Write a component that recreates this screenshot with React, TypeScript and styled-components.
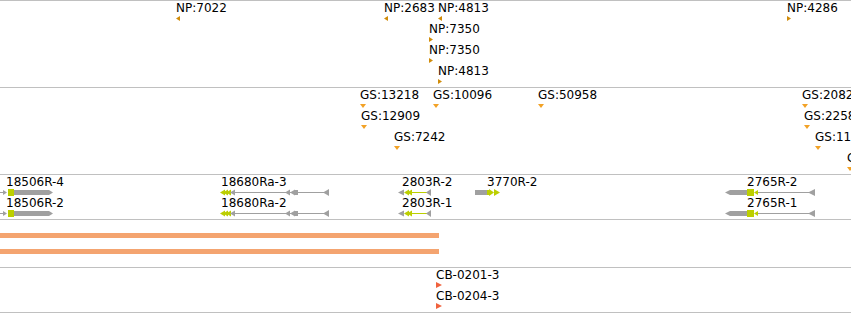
import styled, { createGlobalStyle } from "styled-components";

const GREY = "#a0a0a0";
const LIME = "#bccf00";

const Global = createGlobalStyle`
  html, body {
    margin: 0;
    padding: 0;
    background: #fff;
    overflow: hidden;
  }
  body {
    font-family: "DejaVu Sans", "Liberation Sans", sans-serif;
  }
`;

const Browser = styled.div`
  width: 851px;
  height: 313px;
  overflow: hidden;
  display: flex;
  flex-direction: column;
  background: #fff;
`;

const Track = styled.div<{ $h: number; $last?: boolean }>`
  height: ${(p) => p.$h}px;
  flex-shrink: 0;
  box-sizing: border-box;
  border-top: 1px solid #c0c0c0;
  border-bottom: ${(p) => (p.$last ? "1px solid #c0c0c0" : "none")};
  padding-top: 1px;
  display: flex;
  flex-direction: column;
  overflow: hidden;
`;

const Lane = styled.div`
  position: relative;
  height: 21px;
  flex-shrink: 0;
`;

const Label = styled.span`
  position: absolute;
  top: 0;
  font-size: 12px;
  line-height: 13px;
  color: #000;
  white-space: nowrap;
`;

const Glyph = styled.svg`
  position: absolute;
  top: 12px;
  display: block;
  overflow: visible;
`;

const BarTrack = styled(Track)`
  padding-top: 13px;
  gap: 11px;
`;

const Bar = styled.div<{ $w: number }>`
  width: ${(p) => p.$w}px;
  height: 5px;
  background: #f4a470;
  flex-shrink: 0;
`;

// arrowhead pointing left or right, centred on y = 4.5
const tri = (x: number, w: number, h: number, dir: "l" | "r") => {
  const t = 4.5 - h / 2;
  const b = 4.5 + h / 2;
  return dir === "l"
    ? `${x},4.5 ${x + w},${t} ${x + w},${b}`
    : `${x},${t} ${x + w},4.5 ${x},${b}`;
};

type Mark = { label: string; x: number; dir: "l" | "r" | "d" };

const markColors = { np: "#d08c0a", gs: "#f2a226", cb: "#f0623e" };

const Marker = ({ m, kind }: { m: Mark; kind: keyof typeof markColors }) => {
  const c = markColors[kind];
  let shape = "";
  if (m.dir === "d") shape = "0,3 6,3 3,7";
  else if (kind === "cb") shape = "0,1 6,4 0,7";
  else shape = m.dir === "l" ? "0,4.5 4,2 4,7" : "0,2 4,4.5 0,7";
  return (
    <>
      <Label style={{ left: m.x }}>{m.label}</Label>
      <Glyph width={7} height={9} style={{ left: m.x }}>
        <polygon points={shape} fill={c} />
      </Glyph>
    </>
  );
};

const npLanes: Mark[][] = [
  [
    { label: "NP:7022", x: 176, dir: "l" },
    { label: "NP:2683", x: 384, dir: "l" },
    { label: "NP:4813", x: 438, dir: "l" },
    { label: "NP:4286", x: 787, dir: "r" },
  ],
  [{ label: "NP:7350", x: 429, dir: "r" }],
  [{ label: "NP:7350", x: 429, dir: "r" }],
  [{ label: "NP:4813", x: 438, dir: "r" }],
];

const gsLanes: Mark[][] = [
  [
    { label: "GS:13218", x: 360, dir: "d" },
    { label: "GS:10096", x: 433, dir: "d" },
    { label: "GS:50958", x: 538, dir: "d" },
    { label: "GS:20821", x: 802, dir: "d" },
  ],
  [
    { label: "GS:12909", x: 361, dir: "d" },
    { label: "GS:22584", x: 804, dir: "d" },
  ],
  [
    { label: "GS:7242", x: 394, dir: "d" },
    { label: "GS:11375", x: 815, dir: "d" },
  ],
  [{ label: "GS:9034", x: 847, dir: "d" }],
];

const cbLanes: Mark[][] = [
  [{ label: "CB-0201-3", x: 436, dir: "r" }],
  [{ label: "CB-0204-3", x: 436, dir: "r" }],
];

// gene models, drawn in their own coordinates
const GeneA = () => (
  <>
    <rect x={0} y={4} width={4} height={1} fill={GREY} />
    <polygon points={tri(3, 4, 5, "r")} fill={GREY} />
    <rect x={8} y={1} width={6} height={7} fill={LIME} />
    <rect x={14} y={2} width={35} height={5} fill={GREY} />
    <polygon points={tri(49, 4, 5, "r")} fill={GREY} />
  </>
);

const GeneB = () => (
  <>
    <polygon points={tri(0, 5, 6, "l")} fill={LIME} />
    <polygon points={tri(3, 5, 6, "l")} fill={LIME} />
    <polygon points={tri(6, 5, 6, "l")} fill={LIME} />
    <polygon points={tri(10, 5, 6, "l")} fill={GREY} />
    <rect x={14} y={4} width={95} height={1} fill={GREY} />
    <polygon points={tri(65, 5, 6, "l")} fill={GREY} />
    <polygon points={tri(70, 5, 6, "l")} fill={GREY} />
    <rect x={74} y={2} width={4} height={5} fill={GREY} />
    <polygon points={tri(103, 6, 7, "l")} fill={GREY} />
  </>
);

const GeneC = () => (
  <>
    <polygon points={tri(0, 6, 6, "l")} fill={GREY} />
    <polygon points={tri(6, 5, 6, "l")} fill={LIME} />
    <polygon points={tri(9, 5, 6, "l")} fill={LIME} />
    <rect x={13} y={4} width={17} height={1} fill={LIME} />
    <polygon points={tri(28, 5, 7, "l")} fill={GREY} />
  </>
);

const GeneD = () => (
  <>
    <rect x={0} y={2} width={12} height={5} fill={GREY} />
    <rect x={12} y={2} width={3} height={5} fill={LIME} />
    <polygon points={tri(14, 5, 7, "r")} fill={LIME} />
    <polygon points={tri(19, 6, 7, "r")} fill={LIME} />
  </>
);

const GeneE = () => (
  <>
    <polygon points={tri(0, 5, 5, "l")} fill={GREY} />
    <rect x={5} y={2} width={17} height={5} fill={GREY} />
    <rect x={22} y={1} width={7} height={7} fill={LIME} />
    <polygon points={tri(29, 4, 5, "l")} fill={LIME} />
    <rect x={33} y={4} width={52} height={1} fill={GREY} />
    <polygon points={tri(83, 7, 7, "l")} fill={GREY} />
  </>
);

type Gene = { label: string; labelX: number; x: number; w: number; Model: () => JSX.Element };

const geneLanes: Gene[][] = [
  [
    { label: "18506R-4", labelX: 6, x: 0, w: 54, Model: GeneA },
    { label: "18680Ra-3", labelX: 221, x: 220, w: 110, Model: GeneB },
    { label: "2803R-2", labelX: 402, x: 398, w: 34, Model: GeneC },
    { label: "3770R-2", labelX: 487, x: 475, w: 26, Model: GeneD },
    { label: "2765R-2", labelX: 747, x: 725, w: 91, Model: GeneE },
  ],
  [
    { label: "18506R-2", labelX: 6, x: 0, w: 54, Model: GeneA },
    { label: "18680Ra-2", labelX: 221, x: 220, w: 110, Model: GeneB },
    { label: "2803R-1", labelX: 402, x: 398, w: 34, Model: GeneC },
    { label: "2765R-1", labelX: 747, x: 725, w: 91, Model: GeneE },
  ],
];

const App = () => {
  return (
    <>
      <Global />
      <Browser>
        <Track $h={87}>
          {npLanes.map((lane, i) => (
            <Lane key={i}>
              {lane.map((m) => (
                <Marker key={m.label + m.x} m={m} kind="np" />
              ))}
            </Lane>
          ))}
        </Track>

        <Track $h={87}>
          {gsLanes.map((lane, i) => (
            <Lane key={i}>
              {lane.map((m) => (
                <Marker key={m.label + m.x} m={m} kind="gs" />
              ))}
            </Lane>
          ))}
        </Track>

        <Track $h={45}>
          {geneLanes.map((lane, i) => (
            <Lane key={i}>
              {lane.map((g) => (
                <span key={g.label}>
                  <Label style={{ left: g.labelX }}>{g.label}</Label>
                  <Glyph width={g.w} height={9} style={{ left: g.x }}>
                    <g.Model />
                  </Glyph>
                </span>
              ))}
            </Lane>
          ))}
        </Track>

        <BarTrack $h={48}>
          <Bar $w={439} />
          <Bar $w={439} />
        </BarTrack>

        <Track $h={46} $last>
          {cbLanes.map((lane, i) => (
            <Lane key={i}>
              {lane.map((m) => (
                <Marker key={m.label} m={m} kind="cb" />
              ))}
            </Lane>
          ))}
        </Track>
      </Browser>
    </>
  );
};

export default App;
